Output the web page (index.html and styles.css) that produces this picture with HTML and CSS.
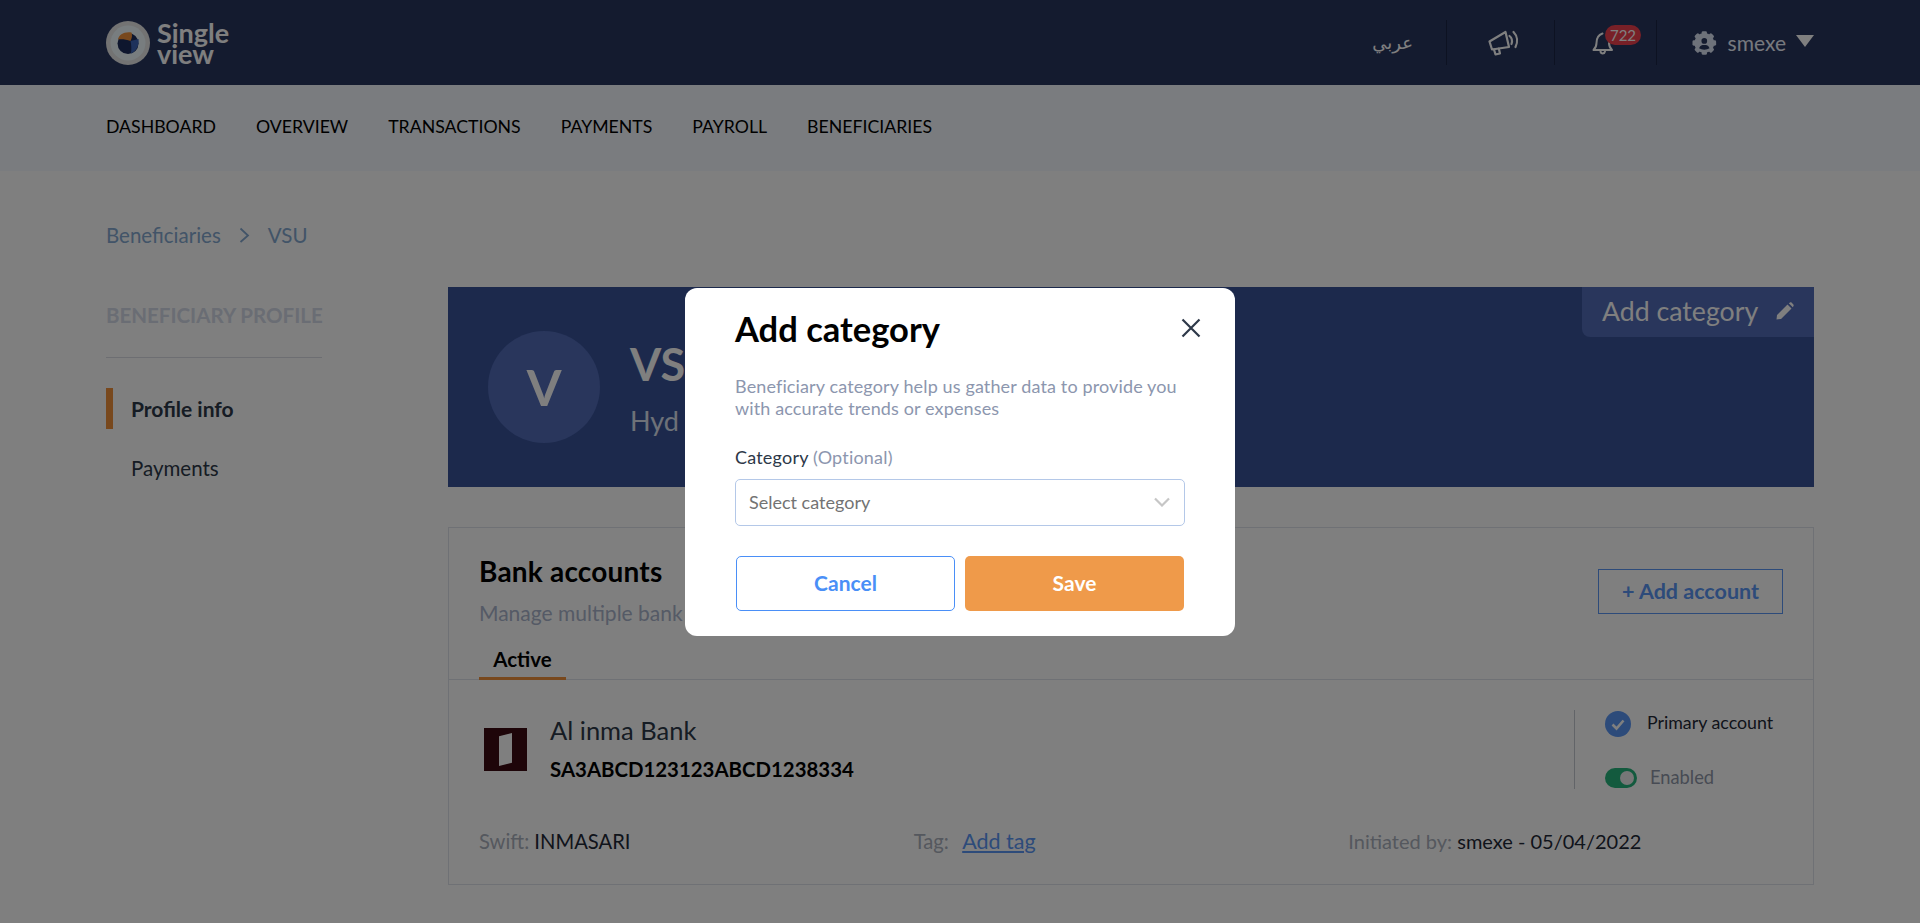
FILE: index.html
```html
<!DOCTYPE html>
<html lang="en">
<head>
<meta charset="UTF-8">
<meta name="viewport" content="width=device-width, initial-scale=1.0">
<title>Beneficiary profile</title>
<link rel="stylesheet" href="styles.css">
</head>
<body>
<header class="topbar">
  <a class="logo" href="#">
    <svg width="44" height="44" viewBox="0 0 44 44">
      <circle cx="22" cy="22" r="22" fill="#e6e6e6"/>
      <circle cx="22" cy="22" r="17.5" fill="#f0fbff"/>
      <circle cx="22" cy="22.5" r="10.5" fill="#1c2c5c"/>
      <path d="M12 18.5C13 13.5 18 10.5 25.5 11.500C26.500 14.500 26 17 24.500 20C20.500 18.500 16 18 12 18.500Z" fill="#f0913a"/>
      <path d="M24.500 20L32.500 18C33.500 24 30.500 30 25 32.500C25.500 28 25.500 24 24.500 20Z" fill="#3c64b8"/>
    </svg>
    <div class="logo-text">
      <div>Single</div>
      <div>view</div>
    </div>
  </a>
  <div class="top-actions">
    <a class="top-item lang" href="#">عربي</a>
    <a class="top-item announce" href="#">
      <svg width="32" height="26" viewBox="0 0 32 26" fill="none" stroke="#fff" stroke-width="2.200" stroke-linejoin="round" stroke-linecap="round">
        <path d="M1.500 11.500L17.500 2L21 17L4 19.500Z"/>
        <path d="M6 19.500L7.500 24.500L12 23.500L10.800 18.500"/>
        <path d="M21.500 6C24 8 24.500 11 23.500 14"/>
        <path d="M25.500 2C29.500 6 30 12 27.500 17"/>
      </svg>
    </a>
    <a class="top-item bell" href="#">
      <svg width="22" height="24" viewBox="0 0 22 24" fill="none" stroke="#fff" stroke-width="2" stroke-linejoin="round" stroke-linecap="round">
        <path d="M10.500 2.500C6 4 4.500 8 4.500 12C4.500 15 3.500 17 1.500 19H20C18 17 17 15 17 12"/>
        <path d="M8.500 20.500C9 23 12.500 23 13 20.500"/>
      </svg>
      <span class="badge">722</span>
    </a>
    <a class="top-item user" href="#">
      <svg width="26" height="26" viewBox="0 0 26 26">
        <g fill="#dce4f4">
          <circle cx="13" cy="13" r="10.500"/>
          <rect x="10.200" y="0.500" width="5.600" height="25" rx="1.500"/>
          <rect x="10.200" y="0.500" width="5.600" height="25" rx="1.500" transform="rotate(45 13 13)"/>
          <rect x="10.200" y="0.500" width="5.600" height="25" rx="1.500" transform="rotate(90 13 13)"/>
          <rect x="10.200" y="0.500" width="5.600" height="25" rx="1.500" transform="rotate(135 13 13)"/>
        </g>
        <circle cx="13" cy="10.800" r="3" fill="#28365f"/>
        <path d="M7.500 18.500C8.500 15.500 10.500 15 13 15C15.500 15 17.500 15.500 18.500 18.500C15.500 20.500 10.500 20.500 7.500 18.500Z" fill="#28365f"/>
      </svg>
      <span class="user-name">smexe</span>
      <span class="caret"></span>
    </a>
  </div>
</header>

<nav class="mainnav">
  <a href="#">DASHBOARD</a>
  <a href="#">OVERVIEW</a>
  <a href="#">TRANSACTIONS</a>
  <a href="#">PAYMENTS</a>
  <a href="#">PAYROLL</a>
  <a href="#">BENEFICIARIES</a>
</nav>

<div class="breadcrumb">
  <a href="#">Beneficiaries</a>
  <svg width="11" height="16" viewBox="0 0 11 16" fill="none" stroke="#84a8d0" stroke-width="1.800"><path d="M1.500 1.500L9 8.500L1.500 15"/></svg>
  <a href="#">VSU</a>
</div>

<div class="page">
  <aside class="sidebar">
    <h3 class="side-title">BENEFICIARY PROFILE</h3>
    <a class="side-link active" href="#">Profile info</a>
    <a class="side-link" href="#">Payments</a>
  </aside>

  <main class="content">
    <section class="banner">
      <div class="avatar">V</div>
      <div class="banner-info">
        <h1>VSU</h1>
        <p>Hyd</p>
      </div>
      <a class="banner-tab" href="#">
        Add category
        <svg width="18" height="18" viewBox="0 0 18 18" fill="#fff"><path d="M0.500 17.500L1 13L11.500 2.500L15.500 6.500L5 17ZM12.800 1.200L14 0.500C14.500 0.200 15 0.200 15.500 0.600L17.400 2.500C17.800 3 17.800 3.500 17.500 4L16.800 5.200Z"/></svg>
      </a>
    </section>

    <section class="card">
      <div class="card-head">
        <div>
          <h2>Bank accounts</h2>
          <p class="card-sub">Manage multiple bank accounts</p>
        </div>
        <a class="add-account" href="#">+ Add account</a>
      </div>
      <div class="tabs"><a class="tab" href="#">Active</a></div>
      <div class="account">
        <div class="bank-logo"><span></span></div>
        <div class="bank-info">
          <div class="bank-name">Al inma Bank</div>
          <div class="iban">SA3ABCD123123ABCD1238334</div>
        </div>
        <div class="status">
          <div class="status-row">
            <svg width="26" height="26" viewBox="0 0 26 26"><circle cx="13" cy="13" r="13" fill="#5a96f5"/><path d="M7.500 13.500L11.500 17.500L18.500 9.500" fill="none" stroke="#fff" stroke-width="2.600"/></svg>
            <span class="primary">Primary account</span>
          </div>
          <div class="status-row enabled">
            <span class="toggle"></span>
            <span class="enabled-text">Enabled</span>
          </div>
        </div>
      </div>
      <div class="meta">
        <div><span class="meta-label">Swift:</span> INMASARI</div>
        <div><span class="meta-label">Tag:</span>&nbsp; <a href="#">Add tag</a></div>
        <div class="meta-initiated"><span class="meta-label">Initiated by:</span> smexe - 05/04/2022</div>
      </div>
    </section>
  </main>
</div>

<div class="overlay">
  <div class="modal">
    <div class="modal-head">
      <h2>Add category</h2>
      <svg width="20" height="20" viewBox="0 0 20 20" stroke="#2d3848" stroke-width="2.200" fill="none"><path d="M1.500 1.500L18.500 18.500M18.500 1.500L1.500 18.500"/></svg>
    </div>
    <p class="modal-text">Beneficiary category help us gather data to provide you with accurate trends or expenses</p>
    <label class="field-label">Category <span>(Optional)</span></label>
    <div class="select">
      Select category
      <svg width="16" height="10" viewBox="0 0 16 10" fill="none" stroke="#c6c6c6" stroke-width="2.200"><path d="M1 1.500L8 8.500L15 1.500"/></svg>
    </div>
    <div class="modal-actions">
      <button class="btn btn-cancel">Cancel</button>
      <button class="btn btn-save">Save</button>
    </div>
  </div>
</div>
</body>
</html>
```

FILE: styles.css
```css
* {
  box-sizing: border-box;
}
body {
  margin: 0;
  background: #fff;
  font-family: Lato, "Open Sans", sans-serif;
  color: #2d3848;
}
a {
  color: inherit;
  text-decoration: none;
}
h1, h2, h3, p {
  margin: 0;
}

/* top bar */
.topbar {
  display: flex;
  justify-content: space-between;
  align-items: center;
  height: 85px;
  padding: 0 106px;
  background: #28365f;
  color: #fff;
}
.logo {
  display: flex;
  align-items: center;
  gap: 7px;
}
.logo-text {
  font-size: 27px;
  line-height: 21px;
  font-weight: 700;
}
.top-actions {
  display: flex;
  align-items: center;
}
.top-item {
  position: relative;
  display: flex;
  align-items: center;
  height: 45px;
}
.lang {
  padding-right: 33px;
  font-family: "DejaVu Sans", sans-serif;
  font-size: 18px;
}
.announce {
  width: 108px;
  padding-left: 41px;
  border-left: 1px solid #1a2444;
}
.bell {
  width: 102px;
  padding-left: 37px;
  border-left: 1px solid #1a2444;
}
.badge {
  position: absolute;
  top: 5px;
  left: 50px;
  width: 36px;
  height: 20px;
  border-radius: 10px;
  background: #f0404e;
  font-size: 15px;
  line-height: 20px;
  text-align: center;
}
.user {
  width: 158px;
  padding-left: 35px;
  border-left: 1px solid #1a2444;
}
.user-name {
  margin-left: 11px;
  font-size: 21px;
  color: #eef3fc;
}
.caret {
  margin-left: 10px;
  margin-bottom: 4px;
  border-left: 9px solid transparent;
  border-right: 9px solid transparent;
  border-top: 12px solid #fff;
}

/* main nav */
.mainnav {
  display: flex;
  align-items: center;
  gap: 40px;
  height: 86px;
  padding: 0 106px 3px;
  background: #f4f8ff;
  font-size: 17.700px;
  color: #000;
}

.breadcrumb {
  display: flex;
  align-items: center;
  gap: 18px;
  padding: 51px 106px 0;
  font-size: 20.500px;
  line-height: 26px;
  color: #84a8d0;
}

.page {
  display: flex;
  padding: 39px 106px 38px;
}

/* left side */
.sidebar {
  width: 342px;
  padding-top: 12px;
}
.side-title {
  width: 216px;
  padding-bottom: 25px;
  border-bottom: 1px solid #dadde4;
  font-size: 20.500px;
  line-height: 33px;
  font-weight: 700;
  color: #d4dae8;
  white-space: nowrap;
}
.side-link {
  display: block;
  height: 41px;
  margin-top: 30px;
  padding-left: 18px;
  border-left: 7px solid transparent;
  font-size: 20.500px;
  line-height: 41px;
}
.side-link + .side-link {
  margin-top: 19px;
}
.side-link.active {
  border-left-color: #f0913a;
  font-size: 21px;
  font-weight: 700;
}

/* banner */
.content {
  width: 1366px;
}
.banner {
  position: relative;
  display: flex;
  align-items: center;
  height: 200px;
  padding-left: 40px;
  background: #385298;
  color: #fff;
}
.avatar {
  width: 112px;
  height: 112px;
  margin-right: 30px;
  border-radius: 50%;
  background: #526cb8;
  font-size: 50px;
  font-weight: 700;
  line-height: 112px;
  text-align: center;
}
.banner-info {
  padding-bottom: 2px;
}
.banner-info h1 {
  font-size: 45px;
  line-height: 56px;
  font-weight: 700;
}
.banner-info p {
  margin-top: 14px;
  font-size: 27px;
  line-height: 30px;
  color: #dde3f0;
}
.banner-tab {
  position: absolute;
  top: 0;
  right: 0;
  display: flex;
  align-items: center;
  gap: 18px;
  width: 232px;
  height: 50px;
  padding: 0 0 2px 20px;
  border-radius: 0 0 0 8px;
  background: #526cb8;
  font-size: 26.700px;
}

/* bank accounts card */
.card {
  height: 358px;
  margin-top: 40px;
  border: 1px solid #dfe3ea;
}
.card-head {
  display: flex;
  justify-content: space-between;
  padding: 26px 30px 0;
}
.card-head h2 {
  font-size: 28px;
  line-height: 34px;
  font-weight: 700;
  letter-spacing: 0.200px;
  color: #000;
}
.card-sub {
  margin-top: 11px;
  font-size: 21px;
  line-height: 28px;
  color: #aab4cc;
}
.add-account {
  width: 185px;
  height: 45px;
  margin-top: 15px;
  border: 1.500px solid #5a96f5;
  font-size: 21.500px;
  font-weight: 700;
  line-height: 42px;
  text-align: center;
  color: #5a96f5;
}
.tabs {
  height: 36px;
  margin-top: 17px;
  padding-left: 30px;
  border-bottom: 1px solid #dfe3ea;
}
.tab {
  display: block;
  width: 87px;
  height: 36px;
  border-bottom: 3px solid #f0913a;
  font-size: 20.500px;
  line-height: 30px;
  font-weight: 700;
  text-align: center;
  color: #000;
}
.account {
  display: flex;
  align-items: flex-start;
  padding: 30px 30px 0;
}
.bank-logo {
  display: flex;
  justify-content: center;
  align-items: center;
  flex-shrink: 0;
  width: 43px;
  height: 43px;
  margin: 18px 23px 0 5px;
  background: #3c0a12;
}
.bank-logo span {
  width: 13px;
  height: 33px;
  background: #fff;
  clip-path: polygon(100% 0, 100% 90%, 0 100%, 0 10%);
}
.bank-info {
  flex: 1;
  padding-top: 5px;
}
.bank-name {
  font-size: 25.500px;
  line-height: 30px;
}
.iban {
  margin-top: 11px;
  font-size: 20.400px;
  line-height: 26px;
  font-weight: 700;
  color: #000;
}
.status {
  width: 209px;
  height: 79px;
  padding-left: 30px;
  border-left: 1px solid #c4c8d0;
}
.status-row {
  display: flex;
  align-items: center;
  gap: 16px;
  height: 27px;
  font-size: 17.800px;
  white-space: nowrap;
}
.primary {
  margin-bottom: 3px;
  color: #1f2937;
}
.enabled {
  gap: 13px;
  margin-top: 27px;
  font-size: 18.300px;
}
.enabled-text {
  margin-bottom: 2px;
  color: #8f97a8;
}
.toggle {
  position: relative;
  width: 32px;
  height: 20px;
  border-radius: 10px;
  background: #26b57c;
}
.toggle::after {
  content: "";
  position: absolute;
  top: 3px;
  right: 3px;
  width: 14px;
  height: 14px;
  border-radius: 50%;
  background: #eee;
}
.meta {
  display: grid;
  grid-template-columns: repeat(3, 1fr);
  margin-top: 39px;
  padding: 0 30px;
  font-size: 20.200px;
  line-height: 26px;
  color: #1f2937;
}
.meta-initiated {
  font-size: 20px;
}
.meta-label {
  color: #aab0bc;
}
.meta a {
  margin-left: 3px;
  font-size: 21.500px;
  color: #5a96f5;
  text-decoration: underline;
}

/* modal */
.overlay {
  position: fixed;
  top: 0;
  right: 0;
  bottom: 0;
  left: 0;
  display: flex;
  justify-content: center;
  align-items: flex-start;
  padding-top: 288px;
  background: rgba(0, 0, 0, 0.5);
}
.modal {
  width: 550px;
  height: 348px;
  padding: 22px 50px 0;
  border-radius: 12px;
  background: #fff;
}
.modal-head {
  display: flex;
  justify-content: space-between;
  align-items: center;
  height: 38px;
}
.modal-head h2 {
  font-size: 34.500px;
  line-height: 38px;
  font-weight: 700;
  color: #000;
}
.modal-head svg {
  margin-right: -16px;
  margin-top: -2px;
}
.modal-text {
  margin-top: 27px;
  font-size: 18px;
  line-height: 22px;
  letter-spacing: 0.130px;
  color: #8c96ae;
}
.field-label {
  display: block;
  margin-top: 26px;
  font-size: 18px;
  line-height: 24px;
  letter-spacing: 0.200px;
  color: #2d3848;
}
.field-label span {
  color: #8c96ae;
}
.select {
  display: flex;
  justify-content: space-between;
  align-items: center;
  width: 450px;
  height: 47px;
  margin-top: 10px;
  padding: 0 14px 2px 13px;
  border: 1px solid #b4c8e8;
  border-radius: 5px;
  font-size: 18px;
  color: #737373;
}
.modal-actions {
  display: flex;
  gap: 10px;
  margin: 30px 1px 0;
}
.btn {
  width: 219px;
  height: 55px;
  padding-bottom: 3px;
  border-radius: 5px;
  font-family: inherit;
  font-size: 21px;
  font-weight: 700;
}
.btn-cancel {
  border: 1px solid #4a8ff7;
  background: #fff;
  color: #4a8ff7;
}
.btn-save {
  border: 0;
  background: #ef9a4a;
  color: #fff;
}
```
